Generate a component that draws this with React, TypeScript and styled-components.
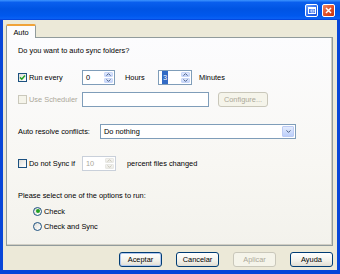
import styled, { createGlobalStyle } from "styled-components";

const GlobalStyle = createGlobalStyle`
  html, body {
    margin: 0;
    padding: 0;
  }
  body {
    width: 340px;
    height: 274px;
    overflow: hidden;
    background: #ece9d8;
    font-family: "Liberation Sans", Arial, sans-serif;
    font-size: 7.4px;
    color: #000;
  }
`;

const Window = styled.div`
  width: 340px;
  height: 274px;
  display: flex;
  flex-direction: column;
`;

const TitleBar = styled.div`
  height: 20px;
  flex-shrink: 0;
  box-sizing: border-box;
  padding: 4px 5px 0 0;
  display: flex;
  justify-content: flex-end;
  align-items: flex-start;
  gap: 4px;
  background: linear-gradient(
    to bottom,
    #3d95ff 0%,
    #0a5fee 12%,
    #0054e3 45%,
    #0058ee 80%,
    #0a62f4 92%,
    #003dd7 100%
  );
`;

const CaptionButton = styled.div<{ $close?: boolean }>`
  width: 13px;
  height: 13px;
  box-sizing: border-box;
  border: 1px solid #fff;
  border-radius: 2px;
  display: flex;
  align-items: center;
  justify-content: center;
  background: ${(p) =>
    p.$close
      ? "linear-gradient(135deg, #f08a65 0%, #e0512a 50%, #c8340e 100%)"
      : "linear-gradient(135deg, #74a6fb 0%, #2c6af0 55%, #1a50d8 100%)"};
`;

const Frame = styled.div`
  flex: 1;
  display: flex;
  flex-direction: column;
  border-style: solid;
  border-color: #0846d8;
  border-width: 0 3px 4px 3px;
  padding: 4px 4px 0 3px;
  background: #ece9d8;
`;

const TabStrip = styled.div`
  height: 13px;
  display: flex;
  align-items: flex-end;
  position: relative;
  z-index: 1;
`;

const Tab = styled.div`
  width: 30px;
  height: 14px;
  margin-bottom: -1px;
  box-sizing: border-box;
  border: 1px solid #919b9c;
  border-bottom: none;
  border-top: 2px solid #f0a33a;
  border-radius: 2px 2px 0 0;
  background: #fcfcfe;
  display: flex;
  align-items: center;
  justify-content: center;
`;

const Panel = styled.div`
  height: 209px;
  box-sizing: border-box;
  border: 1px solid #919b9c;
  box-shadow: inset -1px -1px 0 #d0cec4;
  background: linear-gradient(to bottom, #fcfcfe 0%, #f8f7f3 60%, #f3f2ec 100%);
  padding: 7px 0 0 11px;
  display: flex;
  flex-direction: column;
`;

const Line = styled.div<{ $mt?: number; $indent?: number }>`
  display: flex;
  align-items: center;
  height: 10px;
  margin-top: ${(p) => p.$mt ?? 0}px;
  padding-left: ${(p) => p.$indent ?? 0}px;
`;

const Row = styled.div<{ $mt: number }>`
  display: flex;
  align-items: center;
  height: 15px;
  margin-top: ${(p) => p.$mt}px;
`;

const FieldLabel = styled.div<{ $w?: number; $ml?: number; $disabled?: boolean }>`
  display: flex;
  align-items: center;
  gap: 2px;
  flex-shrink: 0;
  width: ${(p) => (p.$w ? `${p.$w}px` : "auto")};
  margin-left: ${(p) => p.$ml ?? 0}px;
  color: ${(p) => (p.$disabled ? "#aca899" : "#000")};
  white-space: nowrap;
`;

const CheckBox = styled.span<{ $disabled?: boolean }>`
  width: 9px;
  height: 9px;
  box-sizing: border-box;
  flex-shrink: 0;
  border: 1px solid ${(p) => (p.$disabled ? "#cac8bb" : "#1c5180")};
  background: ${(p) =>
    p.$disabled ? "#f5f4ea" : "linear-gradient(135deg, #dcdcd7 0%, #f6f6f4 70%, #fff 100%)"};
  display: flex;
  align-items: center;
  justify-content: center;
`;

const Radio = styled.span`
  width: 9px;
  height: 9px;
  box-sizing: border-box;
  flex-shrink: 0;
  border: 1px solid #1c5180;
  border-radius: 50%;
  background: linear-gradient(135deg, #dcdcd7 0%, #f6f6f4 70%, #fff 100%);
  display: flex;
  align-items: center;
  justify-content: center;
`;

const RadioDot = styled.span`
  width: 4px;
  height: 4px;
  border-radius: 50%;
  background: #21a121;
`;

const SpinBox = styled.div<{ $w: number; $disabled?: boolean }>`
  width: ${(p) => p.$w}px;
  height: 15px;
  box-sizing: border-box;
  flex-shrink: 0;
  border: 1px solid ${(p) => (p.$disabled ? "#c9d0da" : "#7f9db9")};
  background: #fff;
  display: flex;
`;

const SpinValue = styled.div<{ $disabled?: boolean }>`
  flex: 1;
  display: flex;
  align-items: center;
  padding-left: 3px;
  color: ${(p) => (p.$disabled ? "#aca899" : "#000")};
`;

const Selected = styled.span`
  background: #316ac5;
  color: #fff;
  padding: 2px 1px;
`;

const SpinButtons = styled.div`
  width: 10px;
  display: flex;
  flex-direction: column;
  gap: 1px;
  padding: 1px 1px 1px 0;
  box-sizing: border-box;
`;

const SpinArrow = styled.div<{ $disabled?: boolean }>`
  flex: 1;
  border-radius: 1px;
  border: 1px solid ${(p) => (p.$disabled ? "#e8e8e4" : "#c8d6f8")};
  background: ${(p) =>
    p.$disabled
      ? "linear-gradient(#f4f4f1, #eceae4)"
      : "linear-gradient(#e3ebfd, #c2d3fa)"};
  display: flex;
  align-items: center;
  justify-content: center;
`;

const TextField = styled.div<{ $w: number }>`
  width: ${(p) => p.$w}px;
  height: 15px;
  box-sizing: border-box;
  flex-shrink: 0;
  border: 1px solid #7f9db9;
  background: #fff;
`;

const Combo = styled.div`
  width: 196px;
  height: 15px;
  box-sizing: border-box;
  border: 1px solid #7f9db9;
  background: #fff;
  display: flex;
  align-items: center;
  padding: 1px;
`;

const ComboText = styled.div`
  flex: 1;
  padding-left: 2px;
`;

const ComboButton = styled.div`
  width: 12px;
  height: 100%;
  box-sizing: border-box;
  border: 1px solid #bccbf4;
  border-radius: 1px;
  background: linear-gradient(#e3ebfd, #bccffa);
  display: flex;
  align-items: center;
  justify-content: center;
`;

const PushButton = styled.button<{ $w: number; $ml?: number; $default?: boolean }>`
  width: ${(p) => p.$w}px;
  height: 15px;
  margin: 0 0 0 ${(p) => p.$ml ?? 0}px;
  padding: 0;
  flex-shrink: 0;
  font: inherit;
  color: #000;
  border: 1px solid #003c74;
  border-radius: 3px;
  background: linear-gradient(#ffffff 0%, #f2f1ea 60%, #e0ddd3 100%);
  box-shadow: ${(p) => (p.$default ? "inset 0 0 0 1px #b0c7f0" : "none")};
  &:disabled {
    color: #aca899;
    border-color: #c9c7ba;
    background: #f5f4ea;
  }
`;

const ButtonRow = styled.div`
  display: flex;
  justify-content: flex-end;
  gap: 14px;
  margin-top: 6px;
`;

const Check = () => (
  <svg width="7" height="7" viewBox="0 0 7 7">
    <path d="M1 3.4 L2.8 5.2 L6 1.6" fill="none" stroke="#21a121" strokeWidth="1.5" />
  </svg>
);

const Chevron = ({ up, color = "#4d6185" }: { up?: boolean; color?: string }) => (
  <svg width="5" height="3" viewBox="0 0 5 3">
    <path
      d={up ? "M0.5 2.6 L2.5 0.6 L4.5 2.6" : "M0.5 0.4 L2.5 2.4 L4.5 0.4"}
      fill="none"
      stroke={color}
      strokeWidth="1"
    />
  </svg>
);

const Spin = ({
  w,
  children,
  disabled,
}: {
  w: number;
  children: React.ReactNode;
  disabled?: boolean;
}) => (
  <SpinBox $w={w} $disabled={disabled}>
    <SpinValue $disabled={disabled}>{children}</SpinValue>
    <SpinButtons>
      <SpinArrow $disabled={disabled}>
        <Chevron up color={disabled ? "#c9c7ba" : "#4d6185"} />
      </SpinArrow>
      <SpinArrow $disabled={disabled}>
        <Chevron color={disabled ? "#c9c7ba" : "#4d6185"} />
      </SpinArrow>
    </SpinButtons>
  </SpinBox>
);

export default function App() {
  return (
    <>
      <GlobalStyle />
      <Window>
        <TitleBar>
          <CaptionButton>
            <svg width="8" height="7" viewBox="0 0 8 7">
              <rect x="0.5" y="0.5" width="7" height="6" fill="none" stroke="#fff" />
              <rect x="0" y="0" width="8" height="2" fill="#fff" />
              <rect x="3" y="3" width="3" height="2" fill="none" stroke="#fff" strokeWidth="0.8" />
            </svg>
          </CaptionButton>
          <CaptionButton $close>
            <svg width="7" height="7" viewBox="0 0 7 7">
              <path d="M1 1 L6 6 M6 1 L1 6" stroke="#fff" strokeWidth="1.5" />
            </svg>
          </CaptionButton>
        </TitleBar>
        <Frame>
          <TabStrip>
            <Tab>Auto</Tab>
          </TabStrip>
          <Panel>
            <Line>Do you want to auto sync folders?</Line>

            <Row $mt={15}>
              <FieldLabel $w={64}>
                <CheckBox>
                  <Check />
                </CheckBox>
                Run every
              </FieldLabel>
              <Spin w={33}>0</Spin>
              <FieldLabel $w={33} $ml={10}>
                Hours
              </FieldLabel>
              <Spin w={34}>
                <Selected>3</Selected>
              </Spin>
              <FieldLabel $ml={7}>Minutes</FieldLabel>
            </Row>

            <Row $mt={7}>
              <FieldLabel $w={64} $disabled>
                <CheckBox $disabled />
                Use Scheduler
              </FieldLabel>
              <TextField $w={127} />
              <PushButton $w={50} $ml={9} disabled>
                Configure...
              </PushButton>
            </Row>

            <Row $mt={17}>
              <FieldLabel $w={82}>Auto resolve conflicts:</FieldLabel>
              <Combo>
                <ComboText>Do nothing</ComboText>
                <ComboButton>
                  <Chevron />
                </ComboButton>
              </Combo>
            </Row>

            <Row $mt={17}>
              <FieldLabel $w={64}>
                <CheckBox />
                Do not Sync if
              </FieldLabel>
              <Spin w={34} disabled>
                10
              </Spin>
              <FieldLabel $ml={11}>percent files changed</FieldLabel>
            </Row>

            <Line $mt={19}>Please select one of the options to run:</Line>
            <Line $mt={6} $indent={15}>
              <FieldLabel>
                <Radio>
                  <RadioDot />
                </Radio>
                Check
              </FieldLabel>
            </Line>
            <Line $mt={5} $indent={15}>
              <FieldLabel>
                <Radio />
                Check and Sync
              </FieldLabel>
            </Line>
          </Panel>
          <ButtonRow>
            <PushButton $w={43} $default>
              Aceptar
            </PushButton>
            <PushButton $w={43}>Cancelar</PushButton>
            <PushButton $w={43} disabled>
              Aplicar
            </PushButton>
            <PushButton $w={43}>Ayuda</PushButton>
          </ButtonRow>
        </Frame>
      </Window>
    </>
  );
}
